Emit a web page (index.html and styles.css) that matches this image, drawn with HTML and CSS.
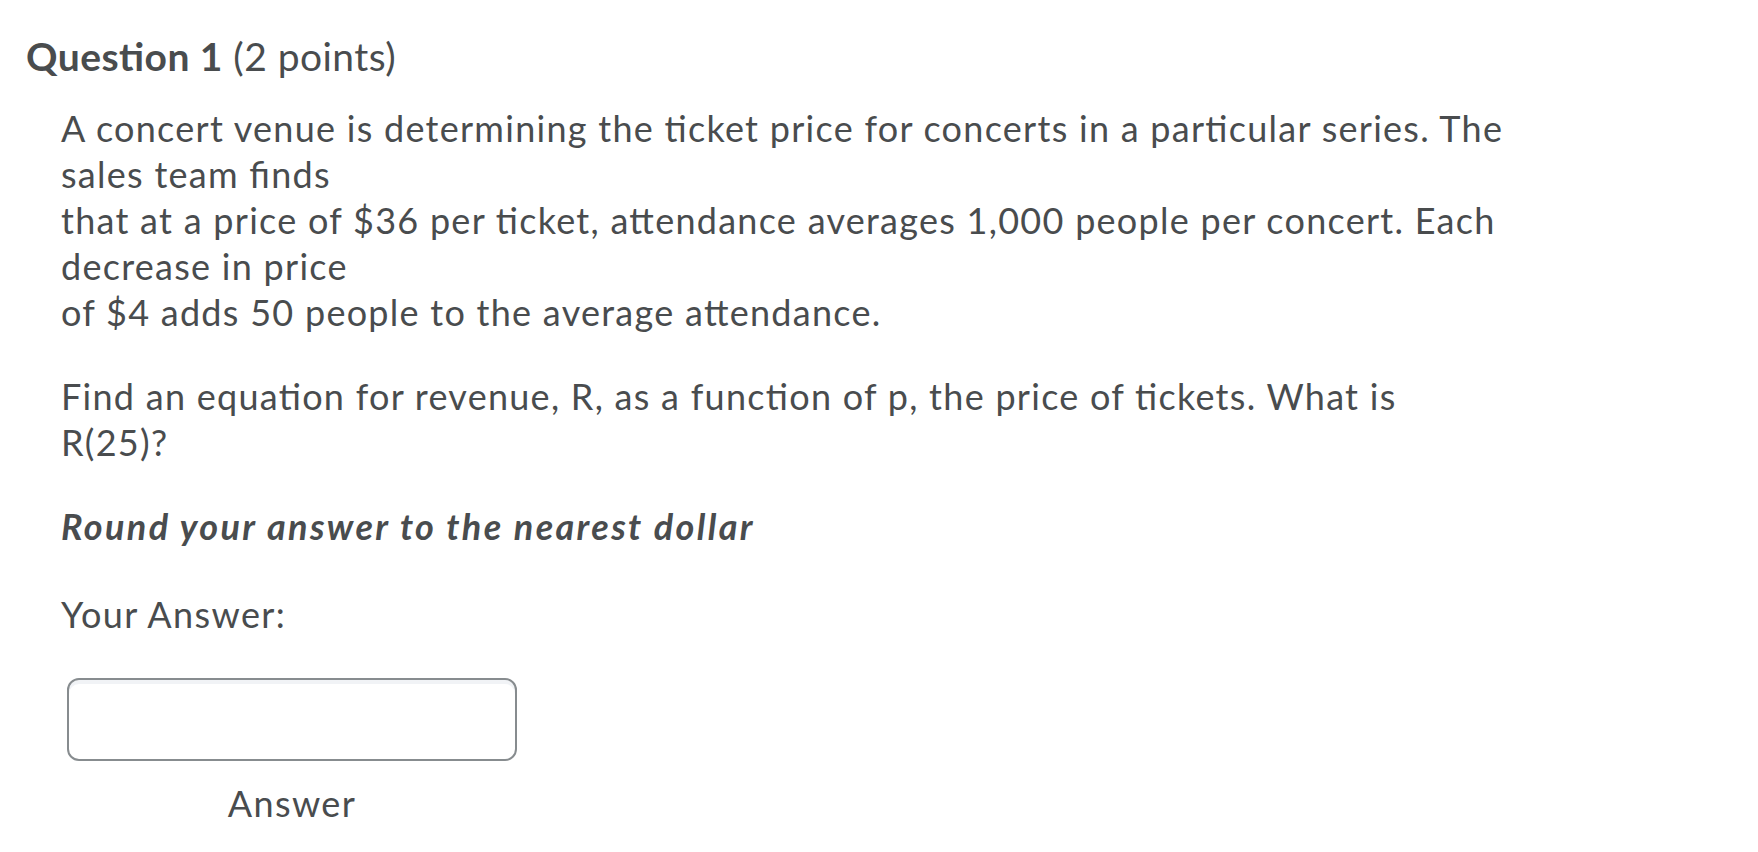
FILE: index.html
```html
<!DOCTYPE html>
<html lang="en">
<head>
<meta charset="utf-8">
<title>Question 1</title>
<link rel="stylesheet" href="styles.css">
</head>
<body>
<div class="question">
  <h2 class="q-title"><strong>Question 1</strong> (2 points)</h2>
  <div class="q-body">
    <p class="q-text">A concert venue is determining the ticket price for concerts in a particular series. The sales team finds<br>that at a price of $36 per ticket, attendance averages 1,000 people per concert. Each decrease in price<br>of $4 adds 50 people to the average attendance.</p>
    <p class="q-text">Find an equation for revenue, R, as a function of p, the price of tickets. What is R(25)?</p>
    <p class="q-text q-note">Round your answer to the nearest dollar</p>
    <p class="q-text q-label">Your Answer:</p>
    <div class="answer-field">
      <input class="answer-input" type="text" aria-label="Answer">
      <div class="answer-caption">Answer</div>
    </div>
  </div>
</div>
</body>
</html>
```

FILE: styles.css
```css
html, body {
  margin: 0;
  padding: 0;
  background: #ffffff;
}

body {
  font-family: Lato, "Open Sans", sans-serif;
  color: #494c4e;
  font-feature-settings: "liga" 1, "clig" 1;
}

.question {
  padding: 33px 0 0 26px;
}

.q-title {
  margin: 0;
  font-size: 39px;
  line-height: 46px;
  font-weight: 400;
  letter-spacing: 0.45px;
}

.q-title strong {
  font-weight: 700;
}

.q-body {
  margin: 26px 0 0 35px;
  width: 1444px;
}

.q-text {
  margin: 0 0 38px 0;
  font-size: 36px;
  line-height: 46px;
  letter-spacing: 1.27px;
}

.q-note {
  font-weight: 700;
  font-style: italic;
  letter-spacing: 2.35px;
  margin-bottom: 42px;
}

.q-label {
  letter-spacing: 1.4px;
  margin-bottom: 41px;
}

.answer-field {
  display: flex;
  flex-direction: column;
  align-items: center;
  width: 450px;
  margin-left: 6px;
}

.answer-input {
  box-sizing: border-box;
  width: 450px;
  height: 83px;
  margin: 0;
  border: 2px solid #878c8f;
  border-radius: 12px;
  box-shadow: inset 0 4px 0 0 rgba(185, 194, 208, 0.2);
  background: #ffffff;
  font-family: inherit;
  font-size: 36px;
  color: #494c4e;
  padding: 0 16px;
  outline: none;
}

.answer-caption {
  margin-top: 19px;
  font-size: 36px;
  line-height: 46px;
  letter-spacing: 1.4px;
}
```
